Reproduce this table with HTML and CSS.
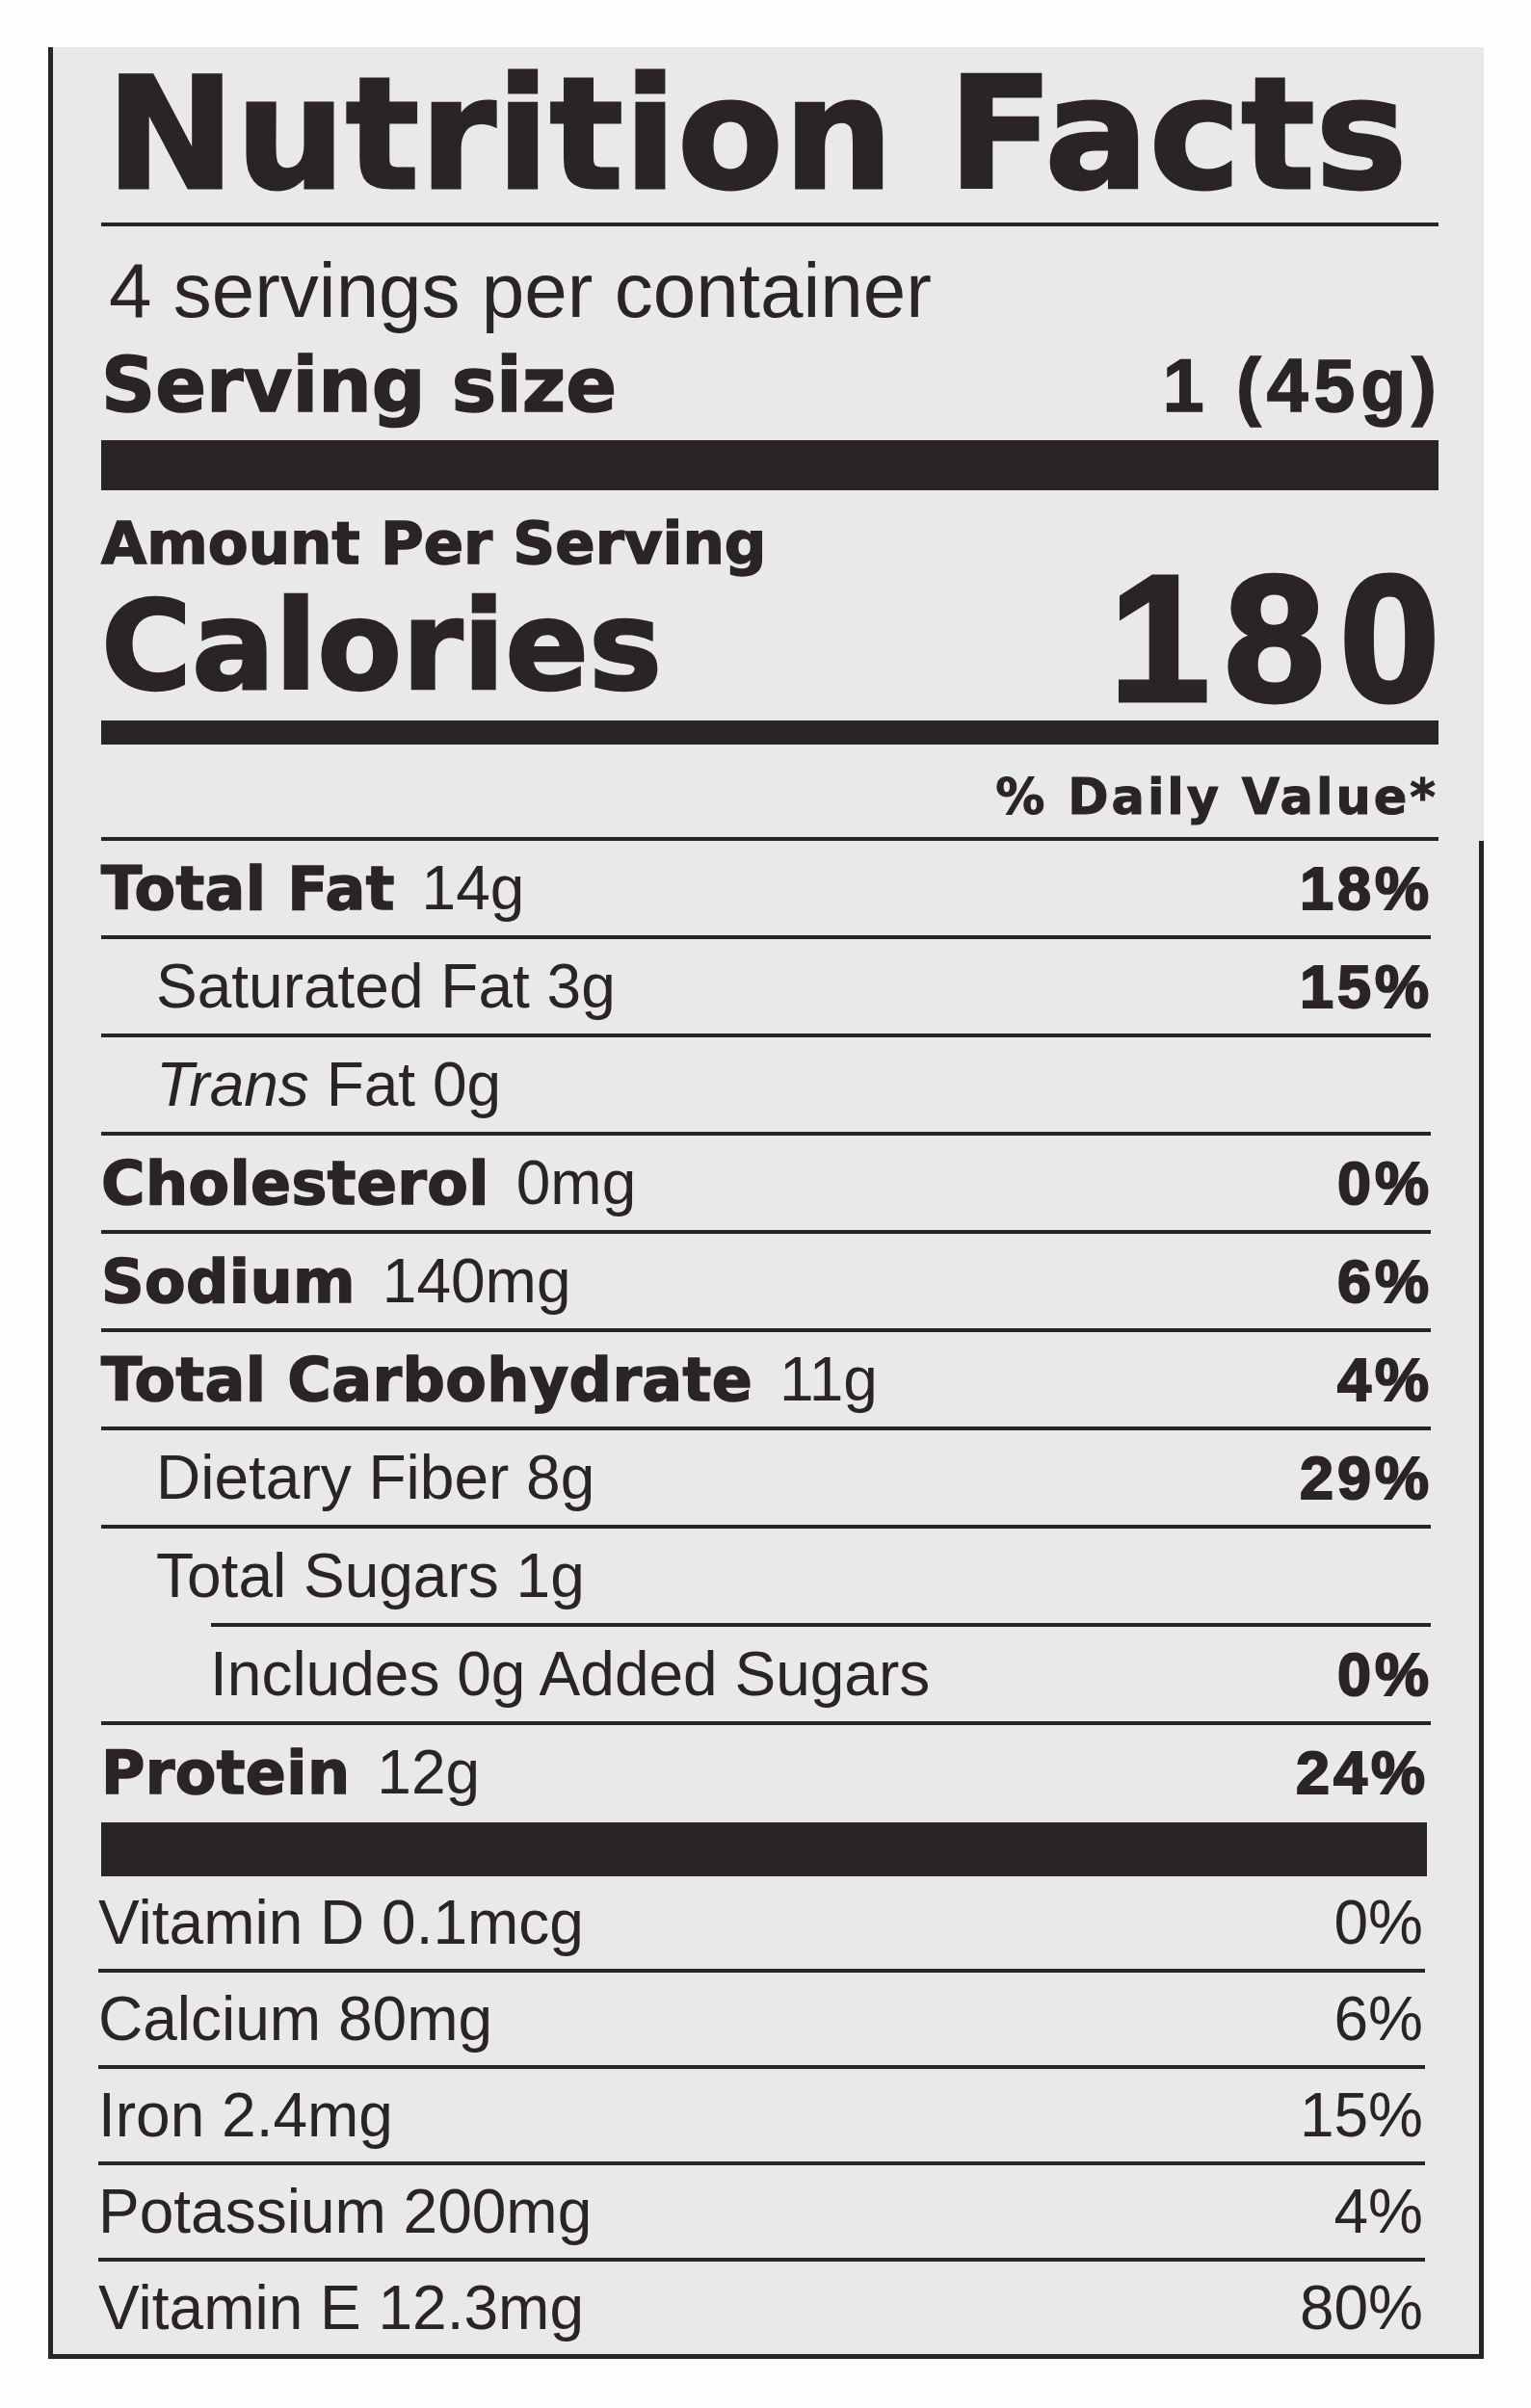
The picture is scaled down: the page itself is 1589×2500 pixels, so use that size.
FILE: index.html
```html
<!DOCTYPE html>
<html lang="en">
<head>
<meta charset="utf-8">
<title>Nutrition Facts</title>
<link rel="stylesheet" href="styles.css">
</head>
<body>
<div class="label">
  <div class="upper">
    <h1 class="title">Nutrition Facts</h1>
    <div class="servings">4 servings per container</div>
    <div class="serving-size"><span>Serving size</span><span class="ss-val">1 (45g)</span></div>
    <div class="bar bar-1"></div>
    <div class="amount">Amount Per Serving</div>
    <div class="calories"><span class="cal-label">Calories</span><span class="cal-num">180</span></div>
    <div class="bar bar-2"></div>
    <div class="dv-head">% Daily Value*</div>
  </div>
  <div class="lower">
    <div class="row"><span class="name"><b>Total Fat</b> <span class="amt">14g</span></span><strong class="pct">18%</strong></div>
    <div class="row ind1"><span class="name">Saturated Fat 3g</span><strong class="pct">15%</strong></div>
    <div class="row ind1"><span class="name"><i>Trans</i> Fat 0g</span></div>
    <div class="row"><span class="name"><b>Cholesterol</b> <span class="amt">0mg</span></span><strong class="pct">0%</strong></div>
    <div class="row"><span class="name"><b>Sodium</b> <span class="amt">140mg</span></span><strong class="pct">6%</strong></div>
    <div class="row"><span class="name"><b>Total Carbohydrate</b> <span class="amt">11g</span></span><strong class="pct">4%</strong></div>
    <div class="row ind1"><span class="name">Dietary Fiber 8g</span><strong class="pct">29%</strong></div>
    <div class="row ind1 no-rule"><span class="name">Total Sugars 1g</span></div>
    <div class="rule-indent"></div>
    <div class="row ind2"><span class="name">Includes 0g Added Sugars</span><strong class="pct">0%</strong></div>
    <div class="row protein"><span class="name"><b>Protein</b> <span class="amt">12g</span></span><strong class="pct">24%</strong></div>
    <div class="bar bar-3"></div>
    <div class="vitamins">
      <div class="vrow"><span>Vitamin D 0.1mcg</span><span>0%</span></div>
      <div class="vrow"><span>Calcium 80mg</span><span>6%</span></div>
      <div class="vrow"><span>Iron 2.4mg</span><span>15%</span></div>
      <div class="vrow"><span>Potassium 200mg</span><span>4%</span></div>
      <div class="vrow last"><span>Vitamin E 12.3mg</span><span>80%</span></div>
    </div>
  </div>
</div>
</body>
</html>
```

FILE: styles.css
```css
* {
  box-sizing: border-box;
  margin: 0;
  padding: 0;
}

body {
  margin: 0;
  background: #fdfdfd;
  color: #2b2425;
  font-family: "Liberation Sans", Arial, sans-serif;
}

.label {
  width: 1490px;
  margin: 49px 0 0 50px;
  background: #e9eae7;
  border-left: 5px solid #2b2425;
  border-bottom: 5px solid #2b2425;
}

.upper {
  padding: 0 47px 0 50px;
}

.lower {
  padding: 0 50px 0 50px;
  border-right: 5px solid #2b2425;
}

/* heavy (Helvetica Black-like) text */
.title,
.serving-size > span:first-child,
.amount,
.cal-label,
.dv-head,
b {
  font-family: "DejaVu Sans", sans-serif;
  font-weight: 700;
}

/* bold numerals */
.ss-val,
.cal-num,
strong {
  font-family: "Liberation Sans", Arial, sans-serif;
  font-weight: 700;
}

.title {
  font-size: 160px;
  line-height: 182px;
  padding-left: 5px;
  border-bottom: 4px solid #2b2425;
  white-space: nowrap;
  letter-spacing: 0.5px;
  -webkit-text-stroke: 3px #2b2425;
}

.servings {
  font-size: 80px;
  line-height: 80px;
  padding: 27px 0 0 8px;
  white-space: nowrap;
}

.serving-size {
  display: flex;
  justify-content: space-between;
  font-size: 78px;
  line-height: 78px;
  padding-top: 19px;
  white-space: nowrap;
  -webkit-text-stroke: 1.5px #2b2425;
}

.ss-val {
  font-size: 77px;
  letter-spacing: 6px;
  margin-right: -4px;
}

.bar {
  background: #2b2425;
}

.bar-1 {
  height: 52px;
  margin-top: 18px;
}

.amount {
  font-size: 61px;
  line-height: 61px;
  padding-top: 24px;
  white-space: nowrap;
  -webkit-text-stroke: 1.5px #2b2425;
}

.calories {
  display: flex;
  justify-content: space-between;
  align-items: flex-start;
  height: 154px;
}

.cal-label {
  font-size: 128px;
  line-height: 128px;
  margin-top: 13px;
  -webkit-text-stroke: 2.5px #2b2425;
}

.cal-num {
  font-size: 186px;
  line-height: 186px;
  margin-top: -24px;
  letter-spacing: 16px;
  margin-right: -17px;
  -webkit-text-stroke: 5px #2b2425;
}

.bar-2 {
  height: 25px;
}

.dv-head {
  text-align: right;
  font-size: 51px;
  line-height: 51px;
  padding: 29px 0 16px;
  letter-spacing: 3px;
  border-bottom: 4px solid #2b2425;
  white-space: nowrap;
  -webkit-text-stroke: 1px #2b2425;
}

.row {
  display: flex;
  justify-content: space-between;
  align-items: baseline;
  height: 102px;
  line-height: 98px;
  font-size: 64px;
  border-bottom: 4px solid #2b2425;
  white-space: nowrap;
}

.row b {
  font-size: 62px;
  letter-spacing: 0.4px;
  -webkit-text-stroke: 1.5px #2b2425;
}

.row strong {
  font-size: 63px;
  letter-spacing: 4px;
  margin-right: -2px;
  -webkit-text-stroke: 2px #2b2425;
}

.row .amt {
  margin-left: 10px;
}

.ind1 {
  padding-left: 57px;
}

.ind2 {
  padding-left: 113px;
}

.no-rule {
  height: 98px;
  border-bottom: none;
}

.rule-indent {
  height: 4px;
  margin-left: 114px;
  background: #2b2425;
}

.protein {
  height: 101px;
  border-bottom: none;
  padding-right: 4px;
}

.bar-3 {
  height: 56px;
  margin-right: 4px;
}

.vitamins {
  margin: 0 6px 0 -3px;
}

.vrow {
  display: flex;
  justify-content: space-between;
  align-items: baseline;
  height: 100px;
  line-height: 96px;
  font-size: 64px;
  padding-right: 2px;
  border-bottom: 4px solid #2b2425;
  white-space: nowrap;
}

.vrow.last {
  height: 96px;
  border-bottom: none;
}
```
